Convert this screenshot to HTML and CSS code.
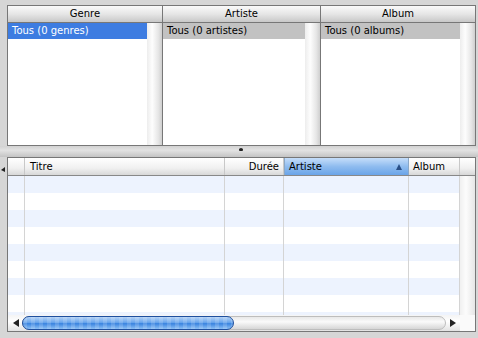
FILE: index.html
```html
<!DOCTYPE html>
<html lang="fr">
<head>
    <meta charset="UTF-8">
    <title>Bibliothèque</title>
    <link rel="stylesheet" href="styles.css">
</head>
<body>
    <div class="browser">
        <div class="pane">
            <div class="pane-head">Genre</div>
            <div class="pane-body">
                <div class="list">
                    <div class="item selected">Tous (0 genres)</div>
                </div>
                <div class="vscroll"></div>
            </div>
        </div>
        <div class="pane">
            <div class="pane-head">Artiste</div>
            <div class="pane-body">
                <div class="list">
                    <div class="item">Tous (0 artistes)</div>
                </div>
                <div class="vscroll"></div>
            </div>
        </div>
        <div class="pane">
            <div class="pane-head">Album</div>
            <div class="pane-body">
                <div class="list">
                    <div class="item">Tous (0 albums)</div>
                </div>
                <div class="vscroll"></div>
            </div>
        </div>
    </div>

    <div class="splitter"><span class="grip"></span></div>

    <div class="tracks-wrap">
        <span class="side-arrow"></span>
        <div class="tracks">
            <div class="thead">
                <div class="col c-num"></div>
                <div class="col c-title">Titre</div>
                <div class="col c-time">Durée</div>
                <div class="col c-artist sorted">Artiste <span class="sort-up"></span></div>
                <div class="col c-album">Album</div>
                <div class="col c-pad"></div>
            </div>
            <div class="rows">
                <div class="row alt"><div class="c-num"></div><div class="c-title"></div><div class="c-time"></div><div class="c-artist"></div><div class="c-album"></div><div class="c-pad"></div></div>
                <div class="row"><div class="c-num"></div><div class="c-title"></div><div class="c-time"></div><div class="c-artist"></div><div class="c-album"></div><div class="c-pad"></div></div>
                <div class="row alt"><div class="c-num"></div><div class="c-title"></div><div class="c-time"></div><div class="c-artist"></div><div class="c-album"></div><div class="c-pad"></div></div>
                <div class="row"><div class="c-num"></div><div class="c-title"></div><div class="c-time"></div><div class="c-artist"></div><div class="c-album"></div><div class="c-pad"></div></div>
                <div class="row alt"><div class="c-num"></div><div class="c-title"></div><div class="c-time"></div><div class="c-artist"></div><div class="c-album"></div><div class="c-pad"></div></div>
                <div class="row"><div class="c-num"></div><div class="c-title"></div><div class="c-time"></div><div class="c-artist"></div><div class="c-album"></div><div class="c-pad"></div></div>
                <div class="row alt"><div class="c-num"></div><div class="c-title"></div><div class="c-time"></div><div class="c-artist"></div><div class="c-album"></div><div class="c-pad"></div></div>
                <div class="row"><div class="c-num"></div><div class="c-title"></div><div class="c-time"></div><div class="c-artist"></div><div class="c-album"></div><div class="c-pad"></div></div>
                <div class="row alt"><div class="c-num"></div><div class="c-title"></div><div class="c-time"></div><div class="c-artist"></div><div class="c-album"></div><div class="c-pad"></div></div>
            </div>
            <div class="hscroll">
                <span class="arrow left"></span>
                <div class="track"><div class="thumb"></div></div>
                <span class="arrow right"></span>
                <div class="corner"></div>
            </div>
        </div>
    </div>
</body>
</html>
```

FILE: styles.css
```css
* {
    margin: 0;
    padding: 0;
    box-sizing: border-box;
}

body {
    width: 478px;
    height: 338px;
    overflow: hidden;
    background: #d6d6d6;
    font-family: "DejaVu Sans", Verdana, sans-serif;
    font-size: 10px;
    color: #000;
    padding-top: 5px;
}

/* navigateur du haut */
.browser {
    margin-left: 7px;
    width: 469px;
    height: 141px;
    border: 1px solid #777;
    display: grid;
    grid-template-columns: 155px 158px 1fr;
    background: #fff;
}

.pane {
    display: flex;
    flex-direction: column;
    border-right: 1px solid #777;
}

.pane:last-child {
    border-right: none;
}

.pane-head {
    height: 17px;
    line-height: 16px;
    text-align: center;
    background: linear-gradient(#fafafa, #e6e6e6 50%, #c8c8c8);
    border-bottom: 1px solid #777;
}

.pane-body {
    flex: 1;
    display: flex;
}

.list {
    flex: 1;
}

.item {
    height: 16px;
    line-height: 16px;
    padding-left: 4px;
    background: #c2c2c2;
    white-space: nowrap;
}

.item.selected {
    background: #3d7ce1;
    color: #fff;
}

.vscroll {
    width: 15px;
    background: linear-gradient(to right, #ededed, #fdfdfd 35%, #e6e6e6 75%, #cfcfcf);
}

/* séparateur */
.splitter {
    height: 11px;
    position: relative;
    background: linear-gradient(#d2d2d2, #e2e2e2 40%, #c4c4c4);
}

.grip {
    position: absolute;
    left: 239px;
    top: 2px;
    width: 4px;
    height: 3px;
    border-radius: 50% 50% 1px 1px;
    background: #222;
}

/* liste des morceaux */
.tracks-wrap {
    position: relative;
    padding-left: 7px;
    padding-right: 2px;
}

.side-arrow {
    position: absolute;
    left: 1px;
    top: 10px;
    border-top: 3px solid transparent;
    border-bottom: 2px solid transparent;
    border-right: 4px solid #222;
}

.tracks {
    width: 469px;
    border: 1px solid #777;
    background: #fff;
}

.thead,
.row {
    display: flex;
}

.thead {
    height: 18px;
    line-height: 17px;
    background: linear-gradient(#ffffff, #f0f0f0 60%, #d8d8d8);
    border-bottom: 1px solid #888;
}

.c-num { width: 17px; }
.c-title { width: 200px; }
.c-time { width: 59px; }
.c-artist { width: 125px; }
.c-album { width: 51px; }
.c-pad { flex: 1; }

.thead .col {
    border-right: 1px solid #c8c8c8;
    white-space: nowrap;
}

.thead .c-pad {
    border-right: none;
}

.thead .c-title {
    padding-left: 5px;
}

.thead .c-time {
    text-align: right;
    padding-right: 4px;
}

.thead .c-artist {
    padding-left: 4px;
}

.thead .c-album {
    padding-left: 4px;
}

.thead .sorted {
    position: relative;
    background: linear-gradient(#c6defa, #8fbcef 50%, #6aa4e8);
    border-right-color: #8aa8c8;
    border-left: 1px solid #8aa8c8;
}

.sort-up {
    position: absolute;
    right: 6px;
    top: 6px;
    border-left: 3px solid transparent;
    border-right: 3px solid transparent;
    border-bottom: 6px solid #2a4f86;
}

.rows {
    height: 139px;
    overflow: hidden;
}

.row {
    height: 17px;
}

.row.alt {
    background: #edf3fe;
}

.row > div {
    border-right: 1px solid #d4d4d4;
}

.row .c-pad {
    border-right: none;
    background: linear-gradient(to right, #f0f0f0, #fcfcfc 40%, #e6e6e6);
}

.hscroll {
    height: 16px;
    display: flex;
    align-items: center;
    background: linear-gradient(#f4f4f4, #ffffff 40%, #e2e2e2);
}

.arrow {
    width: 14px;
    height: 8px;
    position: relative;
}

.arrow::before {
    content: "";
    position: absolute;
    top: 0;
    border-top: 4px solid transparent;
    border-bottom: 4px solid transparent;
}

.arrow.left::before {
    left: 5px;
    border-right: 6px solid #222;
}

.arrow.right::before {
    left: 4px;
    border-left: 6px solid #222;
}

.track {
    flex: 1;
    height: 14px;
    border-radius: 7px;
    background: linear-gradient(#e8e8e8, #fafafa 40%, #d6d6d6);
    border: 1px solid #bdbdbd;
}

.thumb {
    width: 212px;
    height: 14px;
    margin-top: -1px;
    margin-left: -1px;
    border-radius: 7px;
    border: 1px solid #1f4f9e;
    background:
        repeating-linear-gradient(to right, rgba(255,255,255,0.15) 0 4px, rgba(0,0,0,0) 4px 8px),
        linear-gradient(#b4d2f6, #6aa6ec 45%, #3a84e0 55%, #8cc0f5);
}

.corner {
    width: 15px;
    height: 16px;
    background: #fafafa;
}
```
